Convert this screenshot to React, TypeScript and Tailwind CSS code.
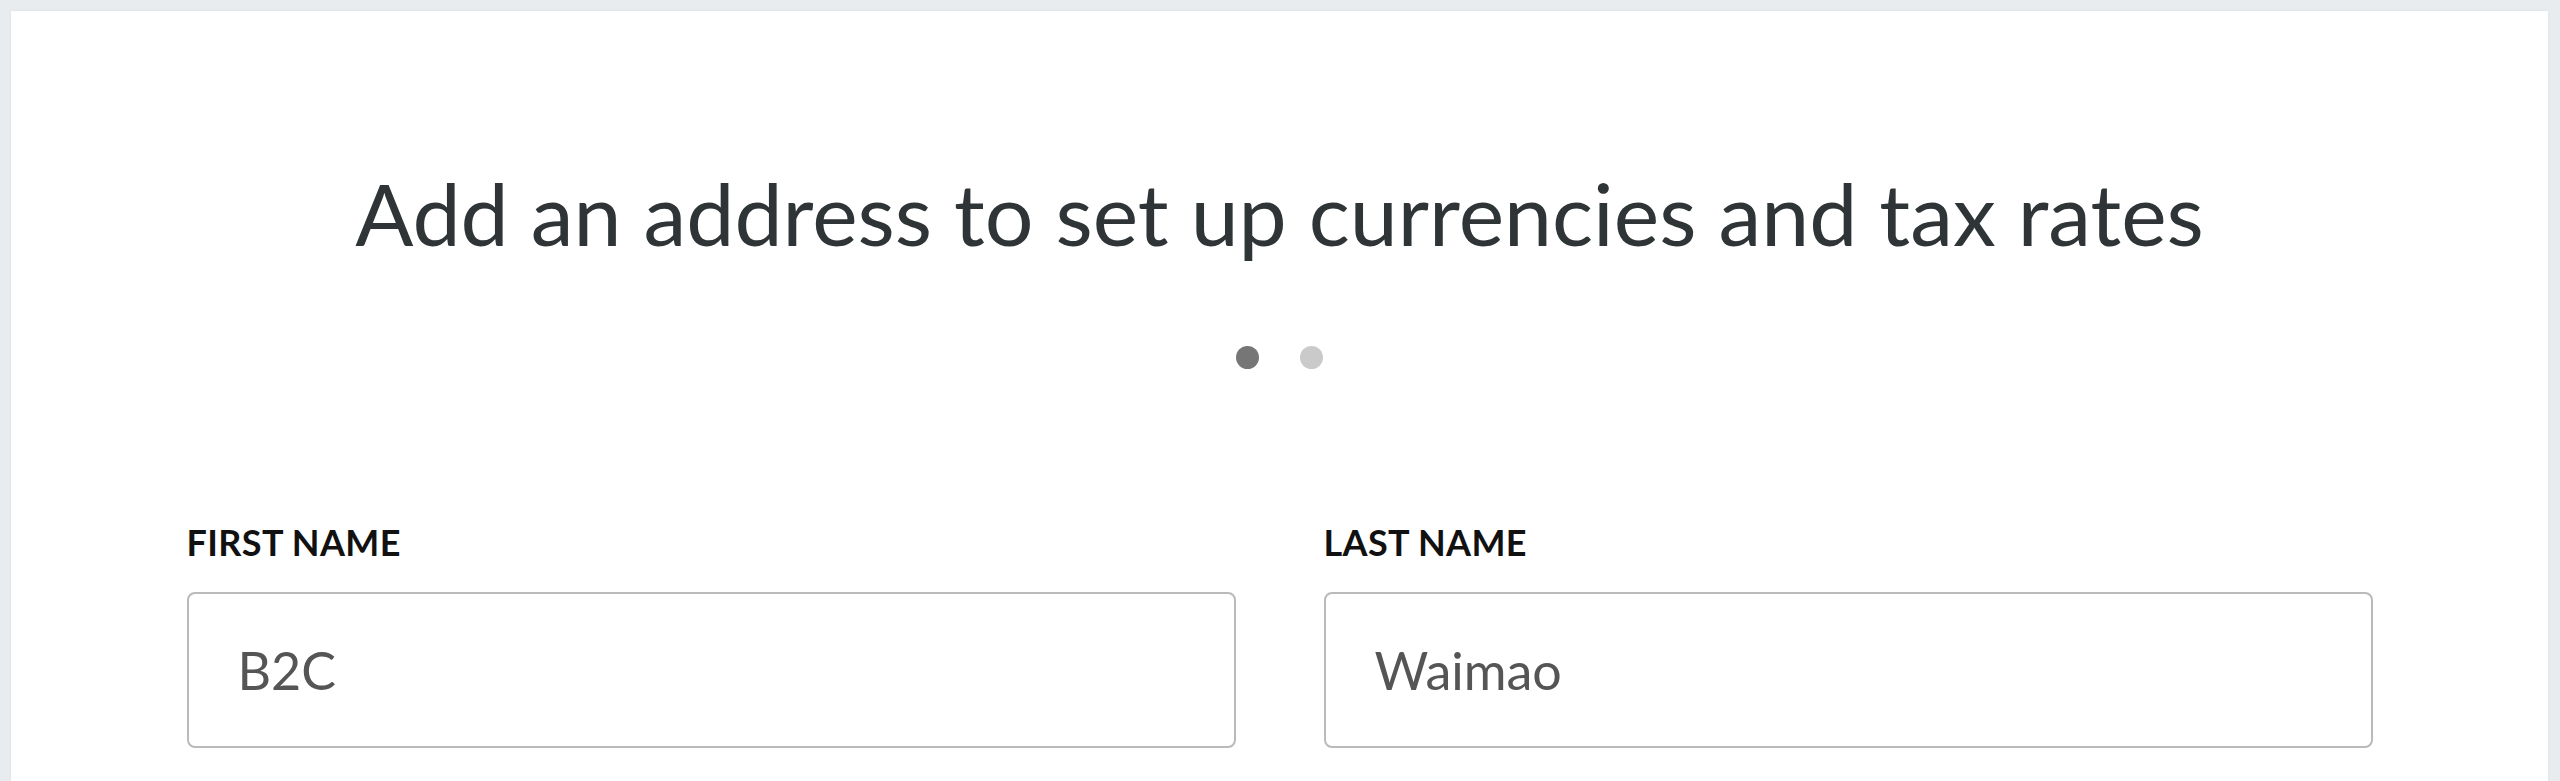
const FONT = { fontFamily: "Lato, 'Noto Sans', sans-serif" };

function Field({ label, value }: { label: string; value: string }) {
  return (
    <div className="flex flex-col">
      <label className="text-[36px] leading-none font-bold uppercase text-[#111] tracking-[0.01em]">
        {label}
      </label>
      <div className="mt-[32px] h-[156px] rounded-[8px] border-2 border-[#bababa] flex items-center pl-[49px]">
        <span className="text-[52px] leading-none text-[#555]">{value}</span>
      </div>
    </div>
  );
}

export default function App() {
  return (
    <div className="min-h-screen bg-[#e9ecef] pt-[11px] pl-[11px] pr-[12px]" style={FONT}>
      <main className="bg-white min-h-[770px] shadow-[0_0_3px_rgba(0,0,0,0.06)] pt-[159px] pb-20">
        <h1 className="text-center text-[86px] leading-none text-[#2f3437] font-normal">
          Add an address to set up currencies and tax rates
        </h1>

        <div className="mt-[90px] flex justify-center gap-[41px]">
          <span className="w-[23px] h-[23px] rounded-full bg-[#767676]" />
          <span className="w-[23px] h-[23px] rounded-full bg-[#cacaca]" />
        </div>

        <form className="mt-[155px] mx-auto w-[2186px] grid grid-cols-2 gap-[88px]">
          <Field label="First name" value="B2C" />
          <Field label="Last name" value="Waimao" />
        </form>
      </main>
    </div>
  );
}
